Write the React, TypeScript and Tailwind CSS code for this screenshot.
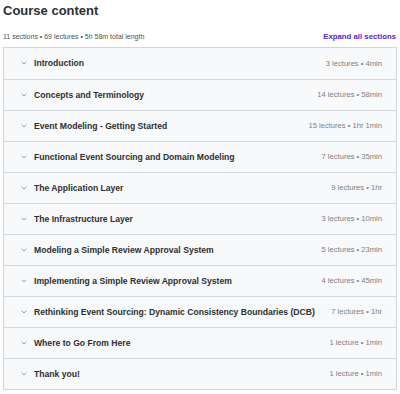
import { ChevronDown } from 'lucide-react';

const sections = [
  { title: 'Introduction', meta: '3 lectures • 4min' },
  { title: 'Concepts and Terminology', meta: '14 lectures • 58min' },
  { title: 'Event Modeling - Getting Started', meta: '15 lectures • 1hr 1min' },
  { title: 'Functional Event Sourcing and Domain Modeling', meta: '7 lectures • 35min' },
  { title: 'The Application Layer', meta: '9 lectures • 1hr' },
  { title: 'The Infrastructure Layer', meta: '3 lectures • 10min' },
  { title: 'Modeling a Simple Review Approval System', meta: '5 lectures • 23min' },
  { title: 'Implementing a Simple Review Approval System', meta: '4 lectures • 45min' },
  { title: 'Rethinking Event Sourcing: Dynamic Consistency Boundaries (DCB)', meta: '7 lectures • 1hr' },
  { title: 'Where to Go From Here', meta: '1 lecture • 1min' },
  { title: 'Thank you!', meta: '1 lecture • 1min' },
];

export default function App() {
  return (
    <div className="h-[394px] w-[400px] bg-white px-[3px] font-['Liberation_Sans',Arial,sans-serif] text-[#2d2f31]">
      <h2 className="pt-[2px] text-[13px] leading-[18px] font-bold">Course content</h2>
      <div className="mt-[12px] flex items-center justify-between pr-[1px]">
        <span className="text-[7px] leading-[10px] text-[#4d5156]">
          11 sections • 69 lectures • 5h 58m total length
        </span>
        <button type="button" className="text-[7.8px] leading-[10px] font-bold text-[#5624d0]">
          Expand all sections
        </button>
      </div>
      <div className="mt-[5px] border border-[#d1d7dc]">
        {sections.map((s, i) => (
          <div
            key={s.title}
            className={`flex h-[31px] items-center justify-between bg-[#f7f9fa] pr-[14px] pl-[16px] ${
              i > 0 ? 'border-t border-[#d1d7dc]' : ''
            }`}
          >
            <div className="flex items-center gap-[6px]">
              <ChevronDown className="h-[8px] w-[8px] text-[#6a6f73]" strokeWidth={2} />
              <span className="text-[8.6px] font-bold">{s.title}</span>
            </div>
            <span className="text-[7.6px] text-[#7b8086]">{s.meta}</span>
          </div>
        ))}
      </div>
    </div>
  );
}
